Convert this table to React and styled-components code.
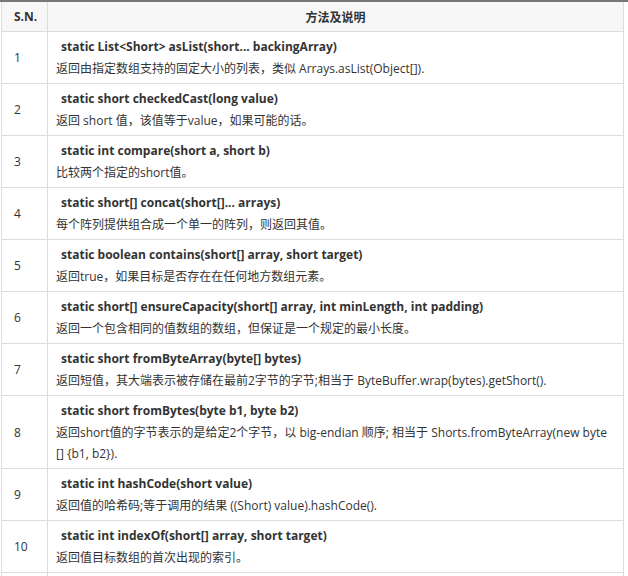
import React from 'react'
import styled, { createGlobalStyle } from 'styled-components';

const GlobalStyle = createGlobalStyle`
  body {
    margin: 0;
    background: #fff;
    font-family: "Open Sans", "Noto Sans CJK SC", sans-serif;
    color: #333;
  }
`;

const methods = [
  { sig: 'static List<Short> asList(short... backingArray)', desc: '返回由指定数组支持的固定大小的列表，类似 Arrays.asList(Object[]).' },
  { sig: 'static short checkedCast(long value)', desc: '返回 short 值，该值等于value，如果可能的话。' },
  { sig: 'static int compare(short a, short b)', desc: '比较两个指定的short值。' },
  { sig: 'static short[] concat(short[]... arrays)', desc: '每个阵列提供组合成一个单一的阵列，则返回其值。' },
  { sig: 'static boolean contains(short[] array, short target)', desc: '返回true，如果目标是否存在在任何地方数组元素。' },
  { sig: 'static short[] ensureCapacity(short[] array, int minLength, int padding)', desc: '返回一个包含相同的值数组的数组，但保证是一个规定的最小长度。' },
  { sig: 'static short fromByteArray(byte[] bytes)', desc: '返回短值，其大端表示被存储在最前2字节的字节;相当于 ByteBuffer.wrap(bytes).getShort().' },
  { sig: 'static short fromBytes(byte b1, byte b2)', desc: '返回short值的字节表示的是给定2个字节，以 big-endian 顺序; 相当于 Shorts.fromByteArray(new byte [] {b1, b2}).' },
  { sig: 'static int hashCode(short value)', desc: '返回值的哈希码;等于调用的结果 ((Short) value).hashCode().' },
  { sig: 'static int indexOf(short[] array, short target)', desc: '返回值目标数组的首次出现的索引。' },
  { sig: 'static int indexOf(short[] array, short[] target)', desc: '返回指定目标的第一次出现的数组内开始位置。' },
]

const MethodTable = () => {
  return (
    <Wrapper>
      <GlobalStyle />
      <Table>
        <thead>
          <tr>
            <HeadCell width={21}>S.N.</HeadCell>
            <HeadCell center>方法及说明</HeadCell>
          </tr>
        </thead>
        <tbody>
          {methods.map((m, i) => (
            <tr key={i}>
              <NumCell>{i + 1}</NumCell>
              <BodyCell>
                <Signature>{m.sig}</Signature>
                <Description>{m.desc}</Description>
              </BodyCell>
            </tr>
          ))}
        </tbody>
      </Table>
    </Wrapper>
  )
}

const Wrapper = styled.div`
  border-top: 2px solid #777;
  padding-left: 1px;
`;

const Table = styled.table`
  width: 623px;
  border-collapse: collapse;
  table-layout: fixed;
  font-size: 12px;
`;

const HeadCell = styled.th`
  width: ${({ width }) => (width ? `${width}px` : 'auto')};
  height: 29px;
  padding: 0 12px;
  background: #f7f7f7;
  border: 1px solid #ddd;
  border-top: none;
  text-align: ${({ center }) => (center ? 'center' : 'left')};
  font-weight: bold;
  font-size: 12px;
  color: #333;
`;

const NumCell = styled.td`
  padding: 0 12px;
  border: 1px solid #ddd;
  vertical-align: middle;
  color: #333;
`;

const BodyCell = styled.td`
  padding: 4px 8px 4px 8px;
  border: 1px solid #ddd;
  vertical-align: top;
`;

const Signature = styled.div`
  padding-left: 5px;
  line-height: 22px;
  font-weight: bold;
  color: #333;
`;

const Description = styled.div`
  line-height: 21px;
  color: #333;
`;

export default MethodTable
